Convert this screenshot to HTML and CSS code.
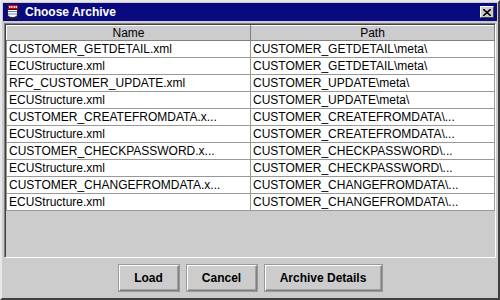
FILE: index.html
```html
<!DOCTYPE html>
<html>
<head>
<meta charset="utf-8">
<link rel="stylesheet" href="styles.css">
</head>
<body>
<div class="window">
  <div class="titlebar">
    <div class="title-left">
      <svg class="app-icon" width="16" height="16" viewBox="0 0 16 16">
        <path d="M3.5 1.5h9v3h-9z" fill="#f0d0d0" stroke="#d00000" stroke-width="1"/>
        <path d="M5 3h1M7 3h2M10 3h1" stroke="#d00000" stroke-width="1"/>
        <path d="M2.5 5.5h10v4.5c0 2.5-2 3.5-5 3.5s-5-1-5-3.5z" fill="#ffffff" stroke="#202020" stroke-width="1"/>
        <path d="M12.5 7h1.5v2.5h-1.5" fill="none" stroke="#202020" stroke-width="1"/>
        <path d="M3 7.5h9M3 10h9" stroke="#6080d0" stroke-width="1"/>
        <path d="M0.5 14.5h15" stroke="#202020" stroke-width="1"/>
      </svg>
      <span class="title-text">Choose Archive</span>
    </div>
    <div class="close-btn">
      <svg width="8" height="7" viewBox="0 0 8 7"><path d="M0 0l8 7M8 0L0 7" stroke="#000" stroke-width="1.6"/></svg>
    </div>
  </div>
  <div class="content">
    <div class="scrollpane">
      <table class="grid">
        <thead>
          <tr><th class="col-name">Name</th><th class="col-path">Path</th></tr>
        </thead>
        <tbody>
          <tr><td>CUSTOMER_GETDETAIL.xml</td><td>CUSTOMER_GETDETAIL\meta\</td></tr>
          <tr><td>ECUStructure.xml</td><td>CUSTOMER_GETDETAIL\meta\</td></tr>
          <tr><td>RFC_CUSTOMER_UPDATE.xml</td><td>CUSTOMER_UPDATE\meta\</td></tr>
          <tr><td>ECUStructure.xml</td><td>CUSTOMER_UPDATE\meta\</td></tr>
          <tr><td>CUSTOMER_CREATEFROMDATA.x...</td><td>CUSTOMER_CREATEFROMDATA\...</td></tr>
          <tr><td>ECUStructure.xml</td><td>CUSTOMER_CREATEFROMDATA\...</td></tr>
          <tr><td>CUSTOMER_CHECKPASSWORD.x...</td><td>CUSTOMER_CHECKPASSWORD\...</td></tr>
          <tr><td>ECUStructure.xml</td><td>CUSTOMER_CHECKPASSWORD\...</td></tr>
          <tr><td>CUSTOMER_CHANGEFROMDATA.x...</td><td>CUSTOMER_CHANGEFROMDATA\...</td></tr>
          <tr><td>ECUStructure.xml</td><td>CUSTOMER_CHANGEFROMDATA\...</td></tr>
        </tbody>
      </table>
    </div>
    <div class="buttons">
      <button class="btn btn-load">Load</button>
      <button class="btn btn-cancel">Cancel</button>
      <button class="btn btn-details">Archive Details</button>
    </div>
  </div>
</div>
</body>
</html>
```
FILE: styles.css
```css
html, body {
  margin: 0;
  padding: 0;
  background: #cccccc;
}
.window {
  width: 500px;
  height: 300px;
  box-sizing: border-box;
  background: #cccccc;
  border: 2px solid;
  border-color: #e8e8e8 #404040 #404040 #e8e8e8;
  display: flex;
  flex-direction: column;
  font-family: "Liberation Sans", Arial, sans-serif;
}
.titlebar {
  margin: 1px 1px 0 1px;
  height: 18px;
  background: #0a0a80;
  display: flex;
  align-items: center;
  justify-content: space-between;
  padding: 0 3px 0 2px;
}
.title-left {
  display: flex;
  align-items: center;
  gap: 4px;
}
.app-icon {
  display: block;
}
.title-text {
  color: #ffffff;
  font-weight: bold;
  font-size: 12px;
}
.close-btn {
  width: 14px;
  height: 12px;
  box-sizing: border-box;
  background: #cccccc;
  border: 1px solid;
  border-color: #ffffff #404040 #404040 #ffffff;
  display: flex;
  align-items: center;
  justify-content: center;
}
.content {
  flex: 1;
  display: flex;
  flex-direction: column;
  padding: 2px 2px 0 2px;
}
.scrollpane {
  height: 235px;
  box-sizing: border-box;
  border: 1px solid;
  border-color: #808080 #ffffff #ffffff #808080;
  box-shadow: inset 1px 1px 0 #404040;
  padding: 1px 0 0 1px;
  background: #cccccc;
}
.grid {
  width: 100%;
  border-collapse: collapse;
  table-layout: fixed;
  font-size: 12px;
}
.grid th {
  height: 14px;
  padding: 0;
  font-weight: normal;
  color: #000;
  background: #cccccc;
  border: 1px solid;
  border-color: #ffffff #808080 #808080 #ffffff;
  text-align: center;
  line-height: 14px;
}
.grid td {
  height: 15px;
  padding: 1px 0 0 2px;
  background: #ffffff;
  border: 1px solid #999999;
  color: #000;
  white-space: nowrap;
  overflow: hidden;
  line-height: 15px;
}
.buttons {
  flex: 1;
  display: flex;
  justify-content: center;
  align-items: center;
  gap: 8px;
}
.btn {
  height: 26px;
  box-sizing: border-box;
  background: #cccccc;
  border: 1px solid;
  border-color: #ffffff #808080 #808080 #ffffff;
  box-shadow: inset -1px -1px 0 #a0a0a0, 0 0 0 1px #999999;
  font-family: "Liberation Sans", Arial, sans-serif;
  font-weight: bold;
  font-size: 12px;
  color: #000;
  padding: 0;
}
.btn-load { width: 60px; }
.btn-cancel { width: 70px; }
.btn-details { width: 117px; }
```
